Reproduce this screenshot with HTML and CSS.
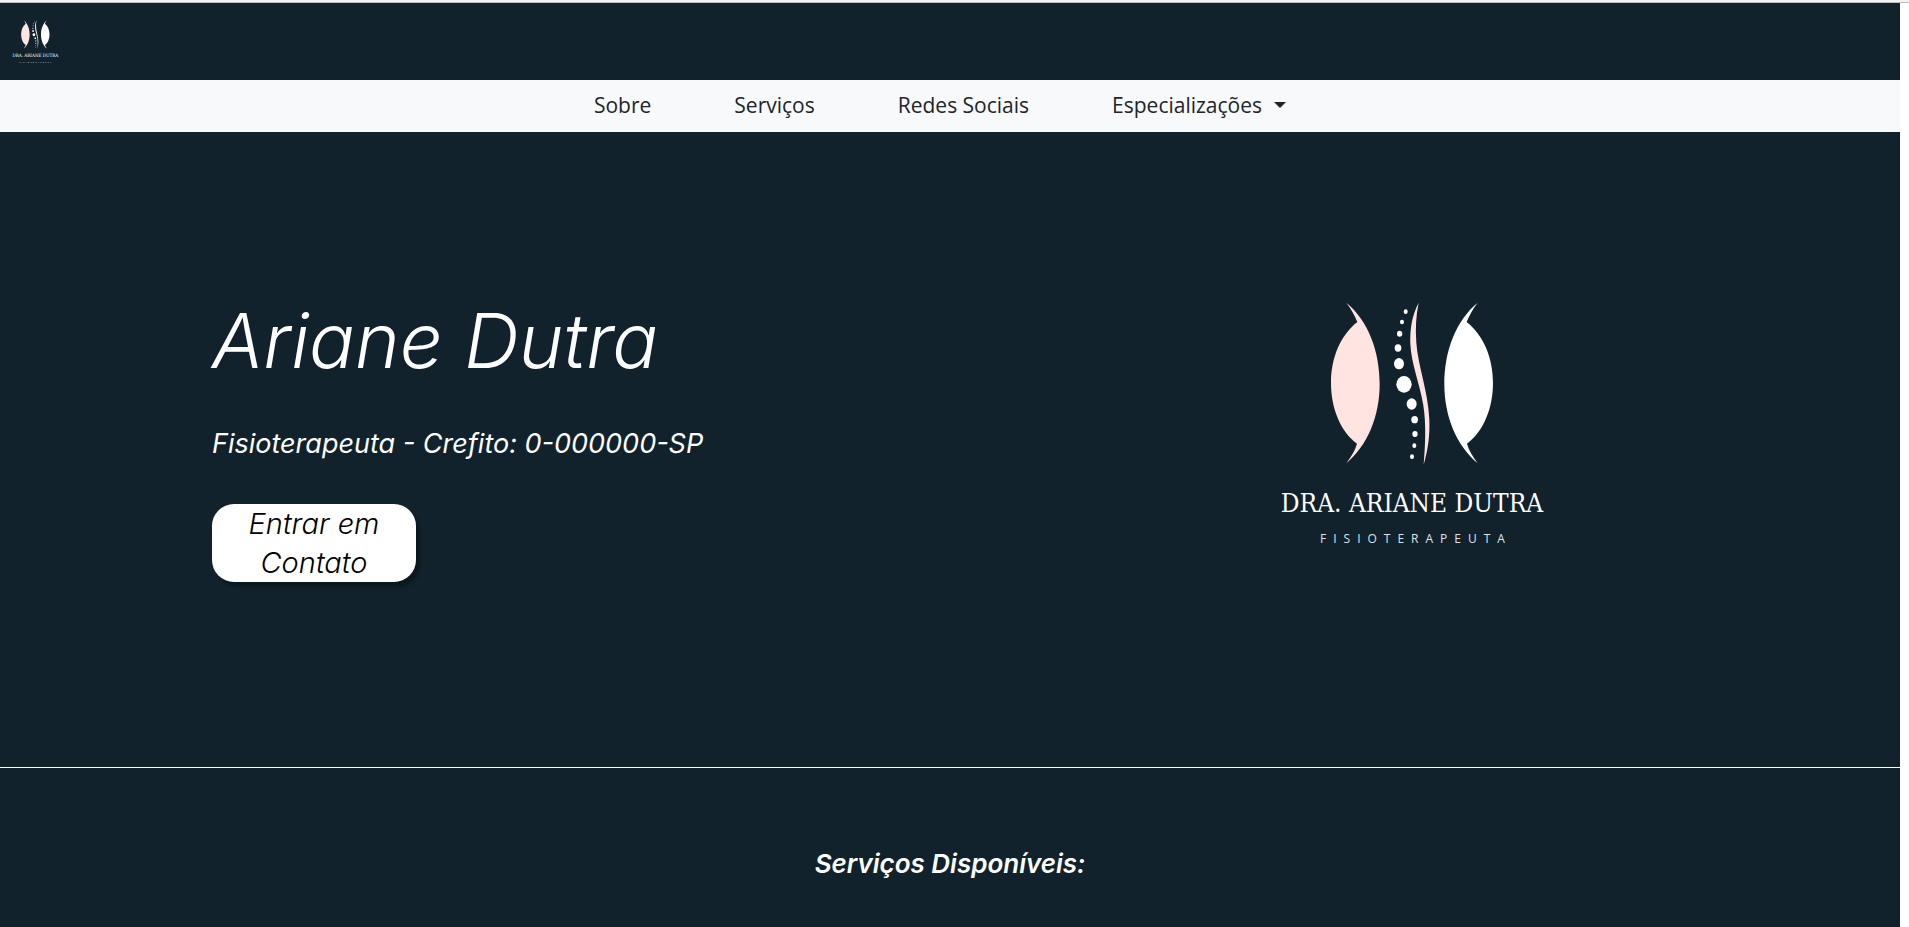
FILE: index.html
```html
<!DOCTYPE html>
<html lang="pt-BR">
<head>
<meta charset="utf-8">
<meta name="viewport" content="width=device-width, initial-scale=1">
<title>Dra. Ariane Dutra - Fisioterapeuta</title>
<link rel="stylesheet" href="styles.css">
</head>
<body>
<div class="page">
  <header class="header">
    <a class="brand" href="#" aria-label="Dra. Ariane Dutra">
      <svg class="brand-logo" viewBox="0 0 268 250"><use href="#logo"/></svg>
    </a>
  </header>
  <nav class="nav">
    <a class="nav-link" href="#sobre">Sobre</a>
    <a class="nav-link" href="#servicos">Serviços</a>
    <a class="nav-link" href="#redes">Redes Sociais</a>
    <button class="nav-link nav-toggle" type="button" aria-haspopup="true">Especializações</button>
  </nav>
  <main>
    <section class="hero" id="sobre">
      <div class="intro">
        <h1 class="name">Ariane Dutra</h1>
        <p class="role">Fisioterapeuta - Crefito: 0-000000-SP</p>
        <button class="contact" type="button">Entrar em Contato</button>
      </div>
      <svg class="hero-logo" viewBox="0 0 268 250" role="img" aria-label="Dra. Ariane Dutra, Fisioterapeuta">
        <g id="logo">
          <g transform="translate(30 -11) scale(.3333)">
            <path fill="#ffe4e1" d="M112 38C178 92 212 184 212 282C212 378 176 466 112 520C126 499 138 483 144 461C94 424 66 354 66 278C66 204 94 136 145 96C136 73 126 57 112 38Z"/>
            <path fill="#fff" d="M506 38C440 92 406 184 406 282C406 378 442 466 506 520C492 499 480 483 474 461C524 424 552 354 552 278C552 204 524 136 473 96C482 73 492 57 506 38Z"/>
            <path fill="#ffe4e1" d="M329 38C309 77 303 115 304 160C306 220 332 280 343 346C352 405 349 465 344 524C357 482 363 436 361 388C357 302 327 228 322 158C319 115 321 78 329 38Z"/>
            <g fill="#fff">
              <ellipse cx="290" cy="65" rx="6" ry="7"/>
              <ellipse cx="279" cy="96" rx="6" ry="7"/>
              <ellipse cx="272" cy="131" rx="8" ry="9"/>
              <ellipse cx="267" cy="174" rx="10" ry="11"/>
              <ellipse cx="270" cy="221" rx="15" ry="17"/>
              <ellipse cx="285" cy="283" rx="23" ry="25"/>
              <ellipse cx="308" cy="342" rx="15" ry="17"/>
              <ellipse cx="317" cy="389" rx="10" ry="11"/>
              <ellipse cx="318" cy="432" rx="8" ry="9"/>
              <ellipse cx="316" cy="467" rx="6" ry="7"/>
              <ellipse cx="309" cy="500" rx="6" ry="7"/>
            </g>
          </g>
          <text class="logo-name" x="133" y="211">DRA. ARIANE DUTRA</text>
          <text class="logo-role" x="137" y="242">FISIOTERAPEUTA</text>
        </g>
      </svg>
    </section>
    <section class="services" id="servicos">
      <h2 class="services-title">Serviços Disponíveis:</h2>
    </section>
  </main>
</div>
</body>
</html>
```
FILE: styles.css
```css
* {
  box-sizing: border-box;
}

body {
  margin: 0;
  background: #fff;
  border-top: 2px solid #f1f3f4;
  overflow: hidden;
  font-family: Inter, "Open Sans", sans-serif;
}

.page {
  min-height: 100vh;
  border-top: 1px solid #bdbdbd;
}

.header,
.nav,
main {
  margin-right: 9px;
}

.header {
  padding: 17px 12px 16px;
  background: #11222d;
}

.brand {
  display: block;
  width: 47px;
}

.brand-logo {
  display: block;
  width: 47px;
  height: 44px;
}

.nav {
  display: flex;
  justify-content: center;
  align-items: center;
  gap: 83px;
  height: 52px;
  padding: 0 20px 2px 0;
  background: #f8f9fa;
}

.nav-link {
  padding: 0;
  border: 0;
  background: none;
  color: #212529;
  font: 400 21px/32px "Open Sans", sans-serif;
  text-decoration: none;
}

.nav-toggle {
  display: flex;
  align-items: center;
  gap: 12px;
}

.nav-toggle::after {
  content: "";
  border: 6px solid transparent;
  border-top-color: #212529;
  border-bottom: 0;
}

main {
  min-height: calc(100vh - 132px);
  background: #11222d;
  color: #fff;
}

.hero {
  display: grid;
  grid-template-columns: 1fr 1fr;
  align-items: center;
  min-height: 636px;
  padding-right: 16px;
  border-bottom: 1px solid #fff;
}

.intro {
  padding: 0 0 20px 212px;
}

.name {
  margin: 0 0 42px;
  font-size: 76px;
  font-style: italic;
  font-weight: 300;
  line-height: 84px;
}

.role {
  margin: 0 0 40px;
  font-size: 27px;
  font-style: italic;
  font-weight: 400;
  line-height: 40px;
}

.contact {
  width: 204px;
  padding: 0 24px;
  border: 0;
  border-radius: 22px;
  background: #fff;
  box-shadow: 4px 5px 3px rgba(0, 0, 0, 0.3);
  color: #000;
  font: italic 300 29px/39px Inter, sans-serif;
}

.hero-logo {
  justify-self: center;
  width: 268px;
  height: 250px;
  margin-bottom: 48px;
}

.logo-name {
  fill: #fff;
  font-family: "DejaVu Serif Condensed", "DejaVu Serif", serif;
  font-size: 26px;
  text-anchor: middle;
}

.logo-role {
  fill: #dfe3e6;
  font-family: "Open Sans", sans-serif;
  font-size: 12px;
  letter-spacing: 7px;
  text-anchor: middle;
}

.services {
  padding: 76px 24px 48px;
}

.services-title {
  margin: 0;
  font-size: 26px;
  font-style: italic;
  font-weight: 600;
  line-height: 40px;
  text-align: center;
}
```
